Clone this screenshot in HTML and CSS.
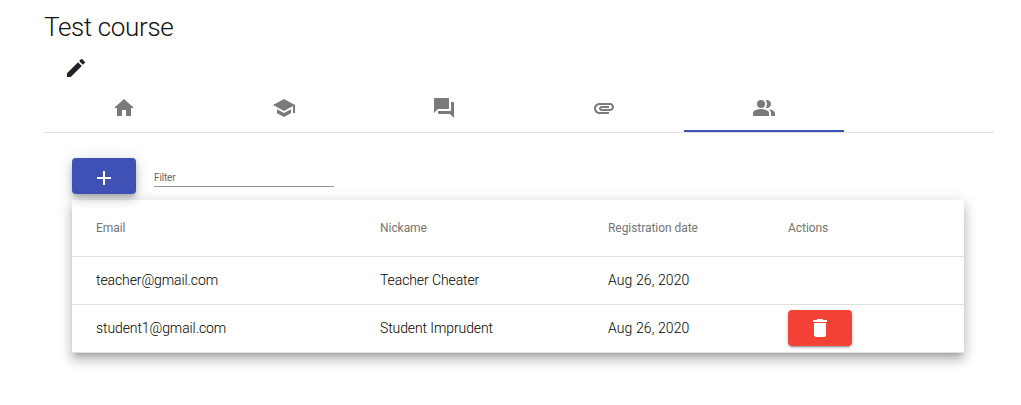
FILE: index.html
```html
<!DOCTYPE html>
<html lang="en">
<head>
<meta charset="utf-8">
<title>Test course</title>
<link rel="stylesheet" href="styles.css">
</head>
<body>
<main class="page">
  <h1 class="title">Test course</h1>
  <button class="edit" aria-label="Edit"><svg viewBox="0 0 24 24"><path d="M3 17.25V21h3.75L17.81 9.94l-3.75-3.75L3 17.25zM20.71 7.04a1 1 0 0 0 0-1.41l-2.34-2.34a1 1 0 0 0-1.41 0l-1.83 1.83 3.75 3.75 1.83-1.83z"/></svg></button>
  <nav class="tabs">
    <a class="tab"><svg viewBox="0 0 24 24"><path d="M10 20v-6h4v6h5v-8h3L12 3 2 12h3v8z"/></svg></a>
    <a class="tab"><svg viewBox="0 0 24 24"><path d="M5 13.18v4L12 21l7-3.82v-4L12 17l-7-3.82zM12 3L1 9l11 6 9-4.91V17h2V9L12 3z"/></svg></a>
    <a class="tab"><svg viewBox="0 0 24 24"><path d="M21 6h-2v9H6v2c0 .55.45 1 1 1h11l4 4V7c0-.55-.45-1-1-1zm-4 6V3c0-.55-.45-1-1-1H3c-.55 0-1 .45-1 1v14l4-4h10c.55 0 1-.45 1-1z"/></svg></a>
    <a class="tab"><svg viewBox="0 0 24 24"><path d="M2 12.5C2 9.46 4.46 7 7.5 7H18c2.21 0 4 1.79 4 4s-1.790 4-4 4H9.500C8.120 15 7 13.880 7 12.500S8.120 10 9.500 10H17v2H9.410c-.55 0-.55 1 0 1H18c1.100 0 2-.9 2-2s-.9-2-2-2H7.500C5.570 9 4 10.570 4 12.500S5.570 16 7.500 16H17v2H7.500C4.460 18 2 15.540 2 12.500z"/></svg></a>
    <a class="tab active"><svg viewBox="0 0 24 24"><path d="M16.67 13.13C18.040 14.060 19 15.320 19 17v3h4v-3c0-2.180-3.570-3.470-6.330-3.870z"/><circle cx="9" cy="8" r="4"/><path d="M15 12c2.210 0 4-1.790 4-4s-1.790-4-4-4c-.47 0-.91.1-1.330.24C14.500 5.270 15 6.580 15 8s-.5 2.730-1.330 3.760c.42.14.86.24 1.330.24zM9 13c-2.670 0-8 1.340-8 4v3h16v-3c0-2.660-5.330-4-8-4z"/></svg></a>
  </nav>
  <section class="content">
    <div class="toolbar">
      <button class="btn add" aria-label="Add"><svg viewBox="0 0 24 24"><path d="M19 13h-6v6h-2v-6H5v-2h6V5h2v6h6v2z"/></svg></button>
      <label class="filter">Filter</label>
    </div>
    <div class="table">
      <div class="row head"><span>Email</span><span>Nickame</span><span>Registration date</span><span>Actions</span></div>
      <div class="row"><span class="email">teacher@gmail.com</span><span class="name">Teacher Cheater</span><span class="date">Aug 26, 2020</span><span></span></div>
      <div class="row"><span class="email">student1@gmail.com</span><span class="name">Student Imprudent</span><span class="date">Aug 26, 2020</span><span><button class="btn remove" aria-label="Delete"><svg viewBox="0 0 24 24"><path d="M6 19c0 1.100.9 2 2 2h8c1.100 0 2-.9 2-2V7H6v12zM19 4h-3.500l-1-1h-5l-1 1H5v2h14V4z"/></svg></button></span></div>
    </div>
  </section>
</main>
</body>
</html>
```
FILE: styles.css
```css
* { box-sizing: border-box; }
body { margin: 0; background: #fff; color: rgba(0,0,0,.87); font-family: Roboto, "Liberation Sans", sans-serif; }
svg { display: block; width: 24px; height: 24px; fill: currentColor; }
button { border: 0; padding: 0; background: none; color: inherit; }
.page { min-height: 405px; padding: 12px 27px 0 44px; }
.title { margin: 0; height: 32px; font-size: 26px; line-height: 31px; font-weight: 300; letter-spacing: -.36px; color: #111; }
.edit { display: block; margin: 12px 0 0 20px; color: #212129; }
.tabs { display: flex; height: 49px; margin-top: 4px; border-bottom: 1px solid #e0e0e0; }
.tab { display: flex; align-items: center; justify-content: center; width: 160px; height: 48px; color: #7a7a7a; }
.tab.active { border-bottom: 2px solid #3f51b5; padding-top: 2px; }
.content { padding: 25px 30px 0 28px; }
.toolbar { display: flex; gap: 18px; height: 42px; }
.btn { display: flex; align-items: center; justify-content: center; width: 64px; height: 36px; border-radius: 4px; color: #fff; box-shadow: 0 3px 1px -2px rgba(0,0,0,.2), 0 2px 2px rgba(0,0,0,.14), 0 1px 5px rgba(0,0,0,.12); }
.add { background: #3f51b5; padding-top: 4px; box-shadow: 0 3px 5px -1px rgba(0,0,0,.2), 0 6px 10px rgba(0,0,0,.14), 0 1px 18px rgba(0,0,0,.12); }
.remove { background: #f44336; }
.filter { width: 180px; height: 29px; padding-top: 13px; border-bottom: 1px solid #949494; font-size: 10px; line-height: 14px; letter-spacing: -.15px; color: #666; }
.table { background: #fff; box-shadow: 0 5px 5px -3px rgba(0,0,0,.2), 0 8px 10px 1px rgba(0,0,0,.14), 0 3px 14px 2px rgba(0,0,0,.12); }
.row { display: grid; grid-template-columns: 284px 228px 180px auto; align-items: center; height: 48px; padding: 0 0 1px 24px; border-bottom: 1px solid #e0e0e0; font-size: 14px; font-weight: 300; color: #000; }
.row.head { height: 57px; padding-bottom: 0; font-size: 12px; font-weight: 400; letter-spacing: -.05px; color: #757575; }
.email { letter-spacing: -.1px; }
.name { letter-spacing: -.1px; }
.date { letter-spacing: .1px; }
```
